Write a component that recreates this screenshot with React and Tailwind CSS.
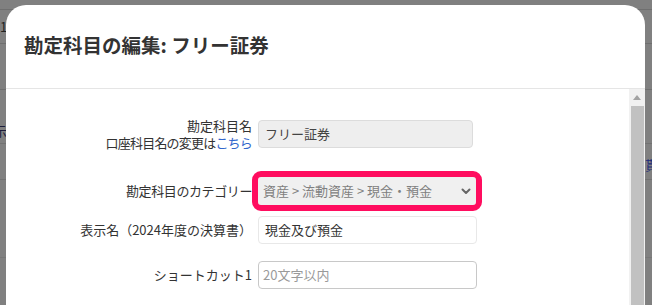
import React from "react";

const font = { fontFamily: '"Noto Sans CJK JP", "Noto Sans", sans-serif' };

function Chevron() {
  return (
    <svg width="10" height="7" viewBox="0 0 10 7" className="shrink-0">
      <path d="M1.5 1.5 L5 5 L8.5 1.5" fill="none" stroke="#666" strokeWidth="2" strokeLinecap="round" strokeLinejoin="round" />
    </svg>
  );
}

export default function App() {
  return (
    <div className="relative w-[652px] h-[305px] overflow-hidden bg-[#808080]" style={font}>
      {/* page behind the overlay */}
      <div className="flex flex-col text-[13px] text-[#1a1a1a]">
        <div className="h-[10px] border-b border-[#6f6f6f]"></div>
        <div className="h-[34px] border-b border-[#6f6f6f] leading-[34px] text-[#222]">1</div>
        <div className="h-[46px] border-b border-[#6f6f6f]"></div>
        <div className="h-[54px] flex items-end justify-between border-b border-[#727272]">
          <span className="text-[#1d1d3a] -ml-[6px] leading-[20px] mb-[2px]">示</span>
        </div>
        <div className="h-[36px] flex items-start justify-end border-b border-[#727272]">
          <span className="text-[#1c2a7a] mr-[-6px] mt-[14px] leading-[14px]">貰</span>
        </div>
        <div className="h-[78px] border-b border-[#777]"></div>
      </div>

      {/* modal */}
      <div className="absolute left-[6px] top-[5px] w-[639px] h-[320px] bg-white rounded-t-[20px] flex flex-col">
        <div className="h-[84px] shrink-0 border-b border-[#e5e5e5] flex items-center pl-[18px] pb-[3px]">
          <h1 className="text-[19.5px] font-bold text-[#333]">勘定科目の編集: フリー証券</h1>
        </div>
        <div className="flex flex-1 min-h-0">
          <div className="flex-1 flex flex-col text-[13px] text-[#333]">
            {/* row 1 */}
            <div className="mt-[28px] h-[34px] flex items-center">
              <div className="w-[246px] text-right leading-[17px]">
                <div>勘定科目名</div>
                <div className="tracking-[-0.8px]">口座科目名の変更は<span className="text-[#3366cc]">こちら</span></div>
              </div>
              <div className="ml-[6px] w-[215px] h-[28px] rounded-[4px] border border-[#dcdcdc] bg-[#eeeeee] flex items-center pl-[6px] text-[#444]">フリー証券</div>
            </div>
            {/* row 2 */}
            <div className="mt-[26px] h-[28px] flex items-center">
              <div className="w-[246px] text-right tracking-[-0.4px]">勘定科目のカテゴリー</div>
              <div className="ml-[6px] w-[218px] h-[28px] rounded-[3px] bg-[#f0f0f0] outline-[6px] outline-solid outline-[#ff0d5f] flex items-center justify-between pl-[5px] pr-[5px] text-[#808080]">
                <span>資産 &gt; 流動資産 &gt; 現金・預金</span>
                <Chevron />
              </div>
            </div>
            {/* row 3 */}
            <div className="mt-[11px] h-[28px] flex items-center">
              <div className="w-[246px] text-right">表示名（2024年度の決算書）</div>
              <div className="ml-[6px] w-[219px] h-[28px] rounded-[4px] border border-[#e8e8e8] bg-white flex items-center pl-[6px] text-[#333]">現金及び預金</div>
            </div>
            {/* row 4 */}
            <div className="mt-[17px] h-[28px] flex items-center">
              <div className="w-[246px] text-right">ショートカット1</div>
              <div className="ml-[6px] w-[219px] h-[28px] rounded-[4px] border border-[#c8c8c8] bg-white flex items-center pl-[4px] text-[#9a9a9a]">20文字以内</div>
            </div>
          </div>
          {/* scrollbar */}
          <div className="w-[16px] bg-[#f1f1f1] flex flex-col items-center">
            <div className="h-[17px] flex items-center justify-center">
              <svg width="8" height="5" viewBox="0 0 8 5"><path d="M0 5 L4 0 L8 5 Z" fill="#a3a3a3" /></svg>
            </div>
            <div className="w-[13px] flex-1 bg-[#c1c1c1]"></div>
          </div>
        </div>
      </div>
    </div>
  );
}
